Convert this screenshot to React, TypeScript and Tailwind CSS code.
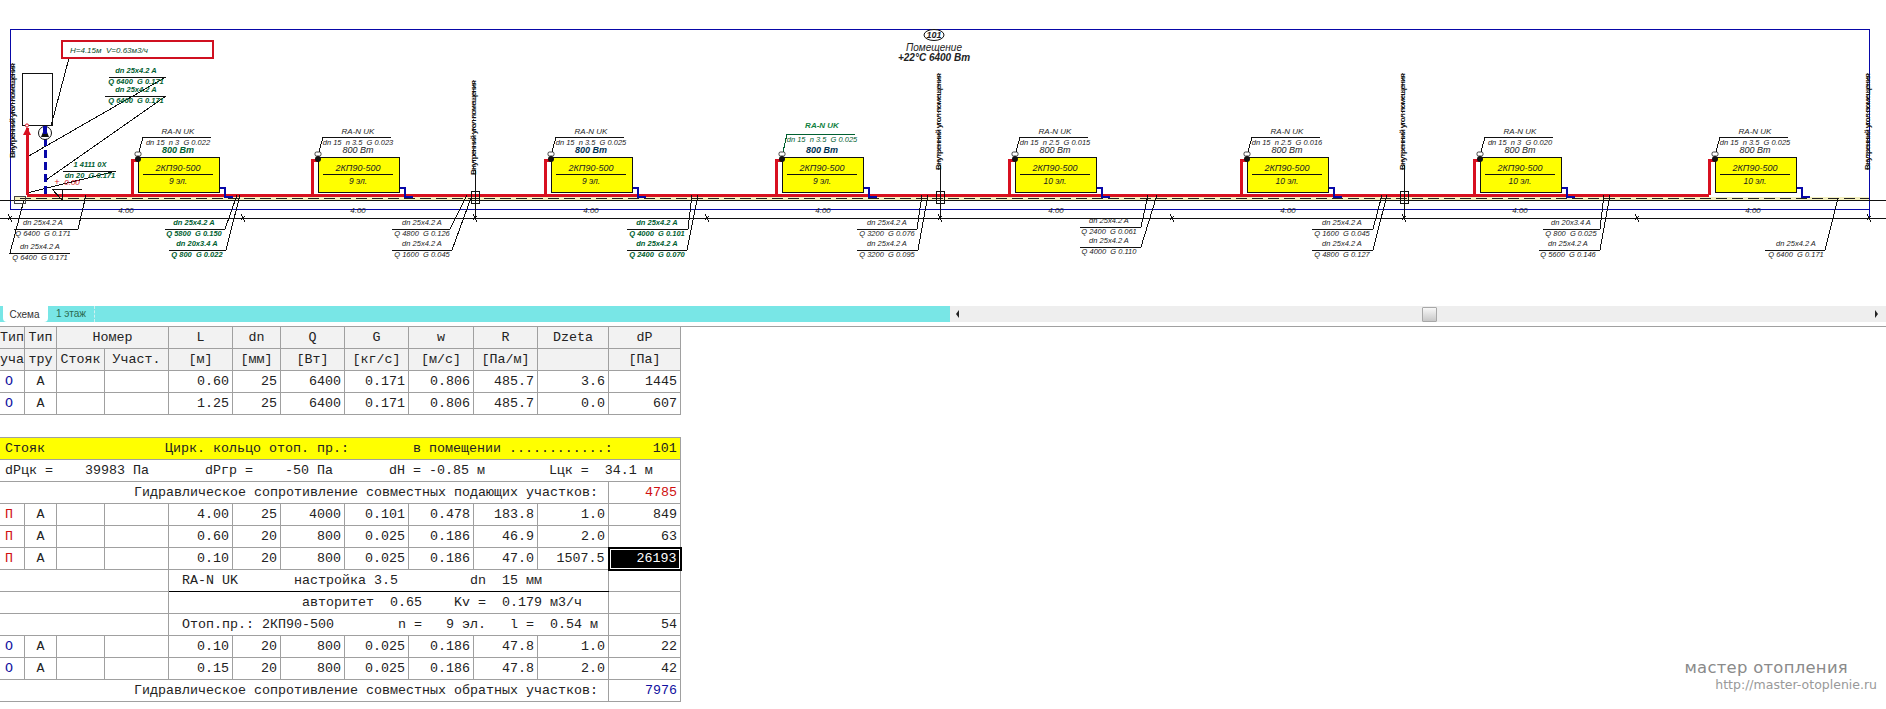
const RED = "#d81020";
const BLUE = "#0808a8";
const GREEN = "#006030";
const DARK = "#222222";

const units = [
    { x: 138, label: "dn 15  n 3  G 0.022", sections: "9 эл.", power: GREEN },
    { x: 318, label: "dn 15  n 3.5  G 0.023", sections: "9 эл.", power: DARK },
    { x: 551, label: "dn 15  n 3.5  G 0.025", sections: "9 эл.", power: "#003050" },
    { x: 782, label: "dn 15  n 3.5  G 0.025", sections: "9 эл.", power: "#003050", green: true },
    { x: 1015, label: "dn 15  n 2.5  G 0.015", sections: "10 эл.", power: DARK },
    { x: 1247, label: "dn 15  n 2.5  G 0.016", sections: "10 эл.", power: DARK },
    { x: 1480, label: "dn 15  n 3  G 0.020", sections: "10 эл.", power: DARK },
    { x: 1715, label: "dn 15  n 3.5  G 0.025", sections: "10 эл.", power: DARK },
];

// top, bottom, center, shelf y, shelf from/to, leader end x/y, colour
const pipeLabels = [
    { a: "dn 25x4.2 A", b: "Q 6400  G 0.171", c: 136, y: 77, x1: 109, x2: 166, lx: 27, ly: 157, color: GREEN },
    { a: "dn 25x4.2 A", b: "Q 6400  G 0.171", c: 136, y: 96, x1: 105, x2: 166, lx: 46, ly: 180, color: GREEN },
    { a: "1 4111 0X", b: "dn 20  G 0.171", c: 90, y: 171, x1: 63, x2: 116, lx: 27, ly: 193, color: GREEN },
    { a: "dn 25x4.2 A", b: "Q 6400  G 0.171", c: 43, y: 229, x1: 14, x2: 78, lx: 86, ly: 195, color: DARK },
    { a: "dn 25x4.2 A", b: "Q 6400  G 0.171", c: 40, y: 253, x1: 10, x2: 70, lx: 24, ly: 200, color: DARK, left: true },
    { a: "dn 25x4.2 A", b: "Q 5800  G 0.150", c: 194, y: 229, x1: 165, x2: 225, lx: 237, ly: 195, color: GREEN },
    { a: "dn 20x3.4 A", b: "Q 800  G 0.022", c: 197, y: 250, x1: 169, x2: 226, lx: 240, ly: 195, color: GREEN },
    { a: "dn 25x4.2 A", b: "Q 4800  G 0.126", c: 422, y: 229, x1: 392, x2: 450, lx: 467, ly: 195, color: DARK },
    { a: "dn 25x4.2 A", b: "Q 1600  G 0.045", c: 422, y: 250, x1: 392, x2: 452, lx: 472, ly: 195, color: DARK },
    { a: "dn 25x4.2 A", b: "Q 4000  G 0.101", c: 657, y: 229, x1: 627, x2: 688, lx: 692, ly: 195, color: GREEN },
    { a: "dn 25x4.2 A", b: "Q 2400  G 0.070", c: 657, y: 250, x1: 627, x2: 687, lx: 698, ly: 195, color: GREEN },
    { a: "dn 25x4.2 A", b: "Q 3200  G 0.076", c: 887, y: 229, x1: 857, x2: 917, lx: 922, ly: 195, color: DARK },
    { a: "dn 25x4.2 A", b: "Q 3200  G 0.095", c: 887, y: 250, x1: 857, x2: 918, lx: 928, ly: 195, color: DARK },
    { a: "dn 25x4.2 A", b: "Q 2400  G 0.061", c: 1109, y: 227, x1: 1080, x2: 1141, lx: 1148, ly: 195, color: DARK },
    { a: "dn 25x4.2 A", b: "Q 4000  G 0.110", c: 1109, y: 247, x1: 1080, x2: 1141, lx: 1157, ly: 195, color: DARK },
    { a: "dn 25x4.2 A", b: "Q 1600  G 0.045", c: 1342, y: 229, x1: 1312, x2: 1373, lx: 1382, ly: 195, color: DARK },
    { a: "dn 25x4.2 A", b: "Q 4800  G 0.127", c: 1342, y: 250, x1: 1312, x2: 1373, lx: 1387, ly: 195, color: DARK },
    { a: "dn 20x3.4 A", b: "Q 800  G 0.025", c: 1571, y: 229, x1: 1543, x2: 1600, lx: 1604, ly: 195, color: DARK },
    { a: "dn 25x4.2 A", b: "Q 5600  G 0.146", c: 1568, y: 250, x1: 1539, x2: 1600, lx: 1610, ly: 195, color: DARK },
    { a: "dn 25x4.2 A", b: "Q 6400  G 0.171", c: 1796, y: 250, x1: 1765, x2: 1825, lx: 1838, ly: 198, color: DARK },
];

const wallLabels = [
    { x: 15, y1: 158, y2: 63, end: true },
    { x: 476, y1: 175, y2: 80 },
    { x: 941, y1: 170, y2: 73 },
    { x: 1405, y1: 170, y2: 73 },
    { x: 1870, y1: 170, y2: 73, end: true },
];

const ticks = [10, 243, 475, 707, 940, 1172, 1404, 1637, 1869];
const lengths = [126, 358, 591, 823, 1056, 1288, 1520, 1753];

function Txt({
    x,
    y,
    size = 7.5,
    color = DARK,
    anchor = "middle",
    bold = false,
    children,
}: {
    x: number;
    y: number;
    size?: number;
    color?: string;
    anchor?: "middle" | "start";
    bold?: boolean;
    children: React.ReactNode;
}) {
    return (
        <text
            x={x}
            y={y}
            fontSize={size}
            fill={color}
            textAnchor={anchor}
            fontWeight={bold ? 700 : 400}
            className="whitespace-pre"
        >
            {children}
        </text>
    );
}

function RadiatorUnit({ unit }: { unit: (typeof units)[number] }) {
    const x = unit.x;
    const right = x + 81;
    const up = unit.green ? 3 : 0;
    return (
        <g>
            <path d={`M${x - 6} 195 V160 H${x}`} fill="none" stroke={RED} strokeWidth="3" />
            <path d={`M${right} 188 H${right + 6} V197 H${right + 14}`} fill="none" stroke={BLUE} strokeWidth="2" />
            <rect x={x} y="157" width="81" height="35" fill="#ffff00" stroke="#111" />
            <line x1={x + 5} y1="174" x2={x + 75} y2="174" stroke="#111" />
            <Txt x={x + 40} y={171} size={9}>2КП90-500</Txt>
            <Txt x={x + 40} y={184} size={8.5}>{unit.sections}</Txt>
            <path d={`M${x + 1} 152 L${x + 5} ${137 - up} H${x + 73}`} fill="none" stroke={unit.green ? GREEN : "#111"} />
            <Txt x={x + 40} y={134 - up * 2} size={8} color={unit.green ? "#108040" : DARK} bold={unit.green}>RA-N UK</Txt>
            <Txt x={x + 40} y={145 - up} color={unit.green ? GREEN : DARK}>{unit.label}</Txt>
            <Txt x={x + 40} y={153} size={9} color={unit.power} bold={unit.power !== DARK}>800 Вт</Txt>
            <circle cx={x} cy="159" r="3" fill="#111" shapeRendering="geometricPrecision" />
            <rect x={x - 3} y="152" width="6" height="4" rx="1.5" fill="#fff" stroke="#111" shapeRendering="geometricPrecision" strokeWidth="0.8" />
        </g>
    );
}

function Schema() {
    return (
        <svg
            viewBox="0 0 1886 306"
            shapeRendering="crispEdges"
            className="block w-[1886px] h-[306px] shrink-0 italic font-['Liberation_Sans',sans-serif]"
        >
            <path d="M10 209 V29 H1869 V218" fill="none" stroke={BLUE} />
            <line x1="10" y1="209" x2="1869" y2="209" stroke={BLUE} />
            <line x1="0" y1="218" x2="1886" y2="218" stroke="#111" />
            <rect x="14" y="197" width="1855" height="3" fill="#f4f0c0" />
            <line x1="0" y1="200" x2="1886" y2="200" stroke="#111" />
            <line x1="20" y1="198" x2="1869" y2="198" stroke="#222" strokeWidth="1" strokeDasharray="11 5" />
            <line x1="27" y1="195" x2="1709" y2="195" stroke={RED} strokeWidth="3" />

            {lengths.map((x) => (
                <Txt key={x} x={x} y={213} size={8}>4.00</Txt>
            ))}
            {ticks.map((x) => (
                <path key={x} d={`M${x - 2} 214 L${x + 2} 222 M${x + 2} 216 L${x - 2} 220`} stroke="#111" fill="none" />
            ))}

            {wallLabels.map((w) => (
                <g key={w.x}>
                    <text
                        transform={`translate(${w.x} ${w.y1}) rotate(-90)`}
                        fontSize="8"
                        fontWeight="700"
                        fill="#111"
                        textLength={w.y1 - w.y2}
                        className="not-italic"
                    >
                        Внутренний угол помещения
                    </text>
                    <line x1={w.x - 3} y1={w.y2} x2={w.x - 3} y2={w.y1} stroke="#111" strokeWidth="0.6" strokeDasharray="1 2" />
                    {!w.end && (
                        <>
                            <line x1={w.x - 1} y1={w.y1 - 5} x2={w.x - 1} y2="218" stroke="#111" />
                            <rect x={w.x - 5} y="191" width="8" height="12" fill="none" stroke="#111" />
                        </>
                    )}
                </g>
            ))}

            {units.map((unit) => (
                <RadiatorUnit key={unit.x} unit={unit} />
            ))}

            {pipeLabels.map((p) => (
                <g key={p.c + "-" + p.y}>
                    <path
                        d={p.left ? `M${p.x2} ${p.y} H${p.x1} L${p.lx} ${p.ly}` : `M${p.x1} ${p.y} H${p.x2} L${p.lx} ${p.ly}`}
                        fill="none"
                        stroke="#111"
                    />
                    <Txt x={p.c} y={p.y - 4} color={p.color} bold={p.color === GREEN}>{p.a}</Txt>
                    <Txt x={p.c} y={p.y + 7} color={p.color} bold={p.color === GREEN}>{p.b}</Txt>
                </g>
            ))}

            {/* boiler + pump */}
            <rect x="22" y="73" width="30" height="52" fill="#fff" stroke="#111" />
            <line x1="27" y1="128" x2="27" y2="195" stroke={RED} strokeWidth="3" />
            <polygon points="27,127 23,135 31,135" fill={RED} shapeRendering="geometricPrecision" />
            <circle cx="27" cy="125.5" r="1.6" fill="#fff" stroke={RED} shapeRendering="geometricPrecision" />
            <line x1="45" y1="126" x2="45" y2="197" stroke={BLUE} strokeWidth="3" strokeDasharray="8 4" />
            <circle cx="45" cy="133" r="6.5" fill="#fff" stroke="#111" shapeRendering="geometricPrecision" />
            <polygon points="45,127 41,137 49,137" fill="#111" shapeRendering="geometricPrecision" />
            <rect x="43" y="126" width="4" height="8" fill={BLUE} />
            <line x1="69" y1="58" x2="51" y2="126" stroke="#111" />
            <rect x="62" y="41" width="151" height="17" fill="#fff" stroke="#d01020" strokeWidth="2" />
            <Txt x={70} y={53} size={8} anchor="start" color="#0a4a2a">H=4.15м  V=0.63м3/ч</Txt>

            {/* level mark */}
            <Txt x={57} y={185} size={9} color={RED}>+</Txt>
            <Txt x={72} y={185} size={8} color={RED}>0.00</Txt>
            <path d="M82 189 H52 L62 200 V189" fill="none" stroke="#111" />
            <rect x="14" y="196" width="11" height="7" fill="none" stroke="#444" />

            {/* room */}
            <ellipse cx="934" cy="35" rx="10" ry="5.5" fill="#fff" stroke="#111" shapeRendering="geometricPrecision" />
            <Txt x={934} y={38} size={9} bold>101</Txt>
            <Txt x={934} y={51} size={10}>Помещение</Txt>
            <Txt x={934} y={61} size={10} bold>+22°C 6400 Вт</Txt>
        </svg>
    );
}

function TabBar() {
    return (
        <div className="flex h-[21px] shrink-0 items-start border-b border-[#a0a0a0] font-['Liberation_Sans',sans-serif] text-[10px]">
            <div className="flex h-4 w-[950px] bg-[#78e6e6]">
                <div className="ml-[3px] flex w-[45px] items-center justify-center rounded-b-sm bg-white pr-[2px] text-[#333]">
                    Схема
                </div>
                <div className="flex w-[47px] items-start justify-center border-r border-dashed border-[#d0f0f0] text-[#2a6a50]">
                    1 этаж
                </div>
            </div>
            <div className="flex h-4 flex-1 items-center bg-[#eeeeee] pl-[6px] pr-[8px]">
                <span className="h-0 w-0 border-y-[4px] border-r-[3px] border-y-transparent border-r-[#222]" />
                <div className="ml-[463px] h-[15px] w-[15px] rounded-[1px] border border-[#a8a8a8] bg-gradient-to-b from-[#f8f8f8] to-[#c8c8c8]" />
                <span className="ml-auto h-0 w-0 border-y-[4px] border-l-[3px] border-y-transparent border-l-[#222]" />
            </div>
        </div>
    );
}

const td = "h-[22px] border border-[#a0a0a0] p-0 overflow-hidden";
const num = td + " text-right pr-[3px]";
const ctr = td + " text-center";
const txt = td + " whitespace-pre";

function Cols() {
    return (
        <colgroup>
            <col className="w-[25px]" />
            <col className="w-[32px]" />
            <col className="w-[48px]" />
            <col className="w-[64px]" />
            <col className="w-[64px]" />
            <col className="w-[48px]" />
            <col className="w-[64px]" />
            <col className="w-[64px]" />
            <col className="w-[65px]" />
            <col className="w-[64px]" />
            <col className="w-[71px]" />
            <col className="w-[72px]" />
        </colgroup>
    );
}

function DataRow({ kind, values }: { kind: "О" | "П"; values: string[] }) {
    return (
        <tr>
            <td className={ctr + " pr-[6px]" + (kind === "О" ? " text-[#1010a0]" : " text-[#d01010]")}>{kind}</td>
            <td className={ctr}>А</td>
            <td className={td} />
            <td className={td} />
            {values.map((v, i) => (
                <td key={i} className={num}>{v}</td>
            ))}
        </tr>
    );
}

const tableClass = "table-fixed border-collapse w-[681px] -ml-px font-['Liberation_Mono',monospace] text-[13.33px] leading-none text-[#222]";
const head = ctr + " bg-[#f2f2f2]";

function TopTable() {
    return (
        <table className={tableClass + " -mt-px"}>
            <Cols />
            <tbody>
                <tr>
                    <td className={head}>Тип</td>
                    <td className={head}>Тип</td>
                    <td className={head} colSpan={2}>Номер</td>
                    <td className={head}>L</td>
                    <td className={head}>dn</td>
                    <td className={head}>Q</td>
                    <td className={head}>G</td>
                    <td className={head}>w</td>
                    <td className={head}>R</td>
                    <td className={head}>Dzeta</td>
                    <td className={head}>dP</td>
                </tr>
                <tr>
                    <td className={head}>уча</td>
                    <td className={head}>тру</td>
                    <td className={head}>Стояк</td>
                    <td className={head}>Участ.</td>
                    <td className={head}>[м]</td>
                    <td className={head}>[мм]</td>
                    <td className={head}>[Вт]</td>
                    <td className={head}>[кг/с]</td>
                    <td className={head}>[м/с]</td>
                    <td className={head}>[Па/м]</td>
                    <td className={head} />
                    <td className={head}>[Па]</td>
                </tr>
                <DataRow kind="О" values={["0.60", "25", "6400", "0.171", "0.806", "485.7", "3.6", "1445"]} />
                <DataRow kind="О" values={["1.25", "25", "6400", "0.171", "0.806", "485.7", "0.0", "607"]} />
            </tbody>
        </table>
    );
}

function RingTable() {
    return (
        <table className={tableClass + " mt-[22px]"}>
            <Cols />
            <tbody>
                <tr>
                    <td className={txt + " bg-[#ffff00] pl-[5px]"} colSpan={12}>
                        {"Стояк               Цирк. кольцо отоп. пр.:        в помещении ............:     101"}
                    </td>
                </tr>
                <tr>
                    <td className={txt + " pl-[5px]"} colSpan={12}>
                        {"dPцк =    39983 Па       dPгр =    -50 Па       dH = -0.85 м        Lцк =  34.1 м"}
                    </td>
                </tr>
                <tr>
                    <td className={num + " pr-[10px]"} colSpan={11}>
                        Гидравлическое сопротивление совместных подающих участков:
                    </td>
                    <td className={num + " text-[#d01010]"}>4785</td>
                </tr>
                <DataRow kind="П" values={["4.00", "25", "4000", "0.101", "0.478", "183.8", "1.0", "849"]} />
                <DataRow kind="П" values={["0.60", "20", "800", "0.025", "0.186", "46.9", "2.0", "63"]} />
                <tr>
                    <td className={ctr + " pr-[6px] text-[#d01010]"}>П</td>
                    <td className={ctr}>А</td>
                    <td className={td} />
                    <td className={td} />
                    <td className={num}>0.10</td>
                    <td className={num}>20</td>
                    <td className={num}>800</td>
                    <td className={num}>0.025</td>
                    <td className={num}>0.186</td>
                    <td className={num}>47.0</td>
                    <td className={num}>1507.5</td>
                    <td className="h-[22px] border-2 border-black p-px">
                        <div className="flex h-full items-center justify-end bg-black pr-[2px] text-white">26193</div>
                    </td>
                </tr>
                <tr>
                    <td className={td} colSpan={4} />
                    <td className={txt + " pl-[13px] !border-b-black"} colSpan={7}>
                        {"RA-N UK       настройка 3.5         dn  15 мм"}
                    </td>
                    <td className={td} />
                </tr>
                <tr>
                    <td className={td} colSpan={4} />
                    <td className={txt + " pl-[13px]"} colSpan={7}>
                        {"               авторитет  0.65    Kv =  0.179 м3/ч"}
                    </td>
                    <td className={td} />
                </tr>
                <tr>
                    <td className={td} colSpan={4} />
                    <td className={txt + " pl-[13px]"} colSpan={7}>
                        {"Отоп.пр.: 2КП90-500        n =   9 эл.   l =  0.54 м"}
                    </td>
                    <td className={num}>54</td>
                </tr>
                <DataRow kind="О" values={["0.10", "20", "800", "0.025", "0.186", "47.8", "1.0", "22"]} />
                <DataRow kind="О" values={["0.15", "20", "800", "0.025", "0.186", "47.8", "2.0", "42"]} />
                <tr>
                    <td className={num + " pr-[10px]"} colSpan={11}>
                        Гидравлическое сопротивление совместных обратных участков:
                    </td>
                    <td className={num + " text-[#1010a0]"}>7976</td>
                </tr>
            </tbody>
        </table>
    );
}

export default function App() {
    return (
        <div className="flex h-screen w-full flex-col overflow-hidden bg-white">
            <Schema />
            <TabBar />
            <div className="flex flex-1 items-end justify-between">
                <div className="self-start">
                    <TopTable />
                    <RingTable />
                </div>
                <div className="mb-[17px] mr-[9px] flex flex-col items-end font-['DejaVu_Sans',sans-serif] text-[#8a8a8a]">
                    <div className="mr-[29px] mb-[1px] text-[16.4px] leading-[18px] tracking-[0.3px]">мастер отопления</div>
                    <div className="text-[12.5px] leading-[14px] text-[#999]">http://master-otoplenie.ru</div>
                </div>
            </div>
        </div>
    );
}
